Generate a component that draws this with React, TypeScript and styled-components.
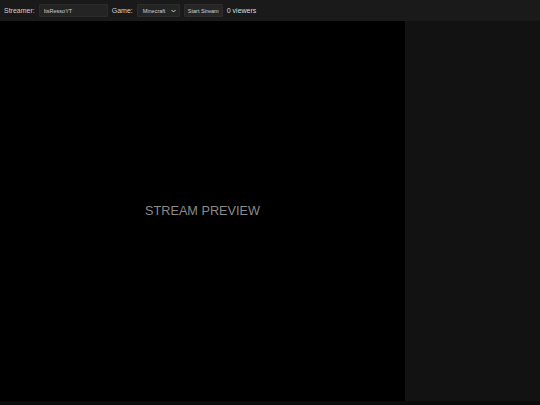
import styled, { createGlobalStyle } from 'styled-components'

const GlobalStyle = createGlobalStyle`
  html, body {
    margin: 0;
    padding: 0;
    background: #0b0b0b;
    font-family: "Liberation Sans", Arial, sans-serif;
  }
`

const Page = styled.div`
  width: 540px;
  height: 405px;
  display: flex;
  flex-direction: column;
  background: #0b0b0b;
  overflow: hidden;
`

const TopBar = styled.div`
  height: 21px;
  flex: none;
  background: #1a1a1a;
  display: flex;
  align-items: center;
  padding-left: 4px;
  gap: 4px;
  color: #d8d8d8;
`

const Label = styled.label`
  font-size: 7px;
  color: #d0d0d0;
`

const Field = styled.input`
  box-sizing: border-box;
  width: 69px;
  height: 13px;
  background: #242424;
  border: 1px solid #2c2c2c;
  border-radius: 1px;
  color: #cfcfcf;
  font-family: "Liberation Sans", Arial, sans-serif;
  font-size: 5.5px;
  padding: 0 4px;
  outline: none;
`

const Select = styled.div`
  box-sizing: border-box;
  width: 43px;
  height: 13px;
  background: #242424;
  border: 1px solid #2c2c2c;
  border-radius: 1px;
  color: #cfcfcf;
  font-size: 5.5px;
  display: flex;
  align-items: center;
  justify-content: space-between;
  padding: 0 3px 0 5px;
`

const Button = styled.button`
  box-sizing: border-box;
  height: 13px;
  width: 39px;
  background: #262626;
  border: 1px solid #2c2c2c;
  border-radius: 1px;
  color: #cfcfcf;
  font-family: "Liberation Sans", Arial, sans-serif;
  font-size: 5.5px;
  padding: 0;
`

const Viewers = styled.span`
  font-size: 7px;
  color: #dcdcdc;
`

const Body = styled.div`
  height: 380px;
  display: flex;
`

const Preview = styled.div`
  width: 405px;
  background: #000;
  display: flex;
  align-items: center;
  justify-content: center;
  color: #8a8a8a;
  font-size: 12.7px;
`

const Sidebar = styled.div`
  flex: 1;
  background: #121212;
`

export default function App() {
  return (
    <>
      <GlobalStyle />
      <Page>
        <TopBar>
          <Label>Streamer:</Label>
          <Field defaultValue="ItsRessoYT" />
          <Label>Game:</Label>
          <Select>
            <span>Minecraft</span>
            <svg width="5" height="4" viewBox="0 0 10 8">
              <path d="M1 2 L5 6 L9 2" stroke="#cfcfcf" strokeWidth="2" fill="none" />
            </svg>
          </Select>
          <Button>Start Stream</Button>
          <Viewers>0 viewers</Viewers>
        </TopBar>
        <Body>
          <Preview>STREAM PREVIEW</Preview>
          <Sidebar />
        </Body>
      </Page>
    </>
  )
}
